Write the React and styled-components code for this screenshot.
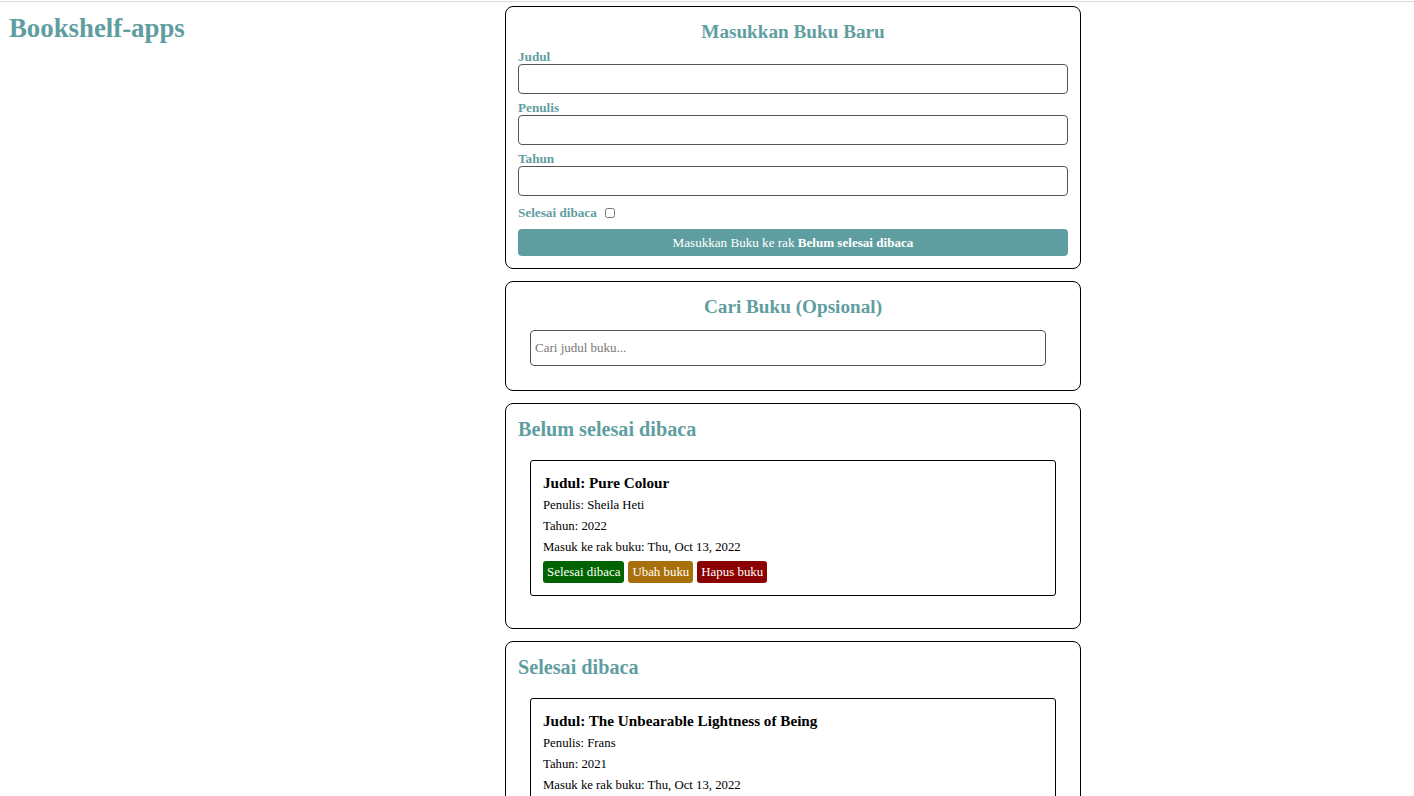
import React from 'react';
import styled, { createGlobalStyle } from 'styled-components';

const GlobalStyle = createGlobalStyle`
  body{
    margin: 0;
    font-family: "Liberation Serif", "DejaVu Serif", serif;
    background: #fff;
  }
  *{ box-sizing: border-box; }
`;

const Page = styled.div`
  margin-top: 1px;
  border-top: 1px solid #dcdcdc;
  display: flex;
  align-items: flex-start;
  min-height: 794px;
`;

const Header = styled.header`
  width: 505px;
  flex-shrink: 0;
  padding: 12px 0 0 9px;
  h1{
    margin: 0;
    font-size: 26.8px;
    line-height: 28px;
    color: #5f9ea0;
  }
`;

const Main = styled.main`
  width: 576px;
  padding-top: 4px;
  display: flex;
  flex-direction: column;
  gap: 12px;
`;

const Card = styled.section`
  border: 1px solid #000;
  border-radius: 8px;
  padding: 11px 12px ${props => props.bottom || 12}px;
  h2{
    margin: 0;
    font-size: ${props => props.center ? 19.2 : 20.2}px;
    line-height: 28px;
    color: #5f9ea0;
    text-align: ${props => props.center ? 'center' : 'left'};
  }
`;

const Field = styled.div`
  margin-top: ${props => props.first ? 4 : 7}px;
  label{
    display: block;
    font-size: 13.2px;
    line-height: 14px;
    font-weight: bold;
    color: #5f9ea0;
  }
  input{
    display: block;
    width: 100%;
    height: 30px;
    border: 1px solid #555;
    border-radius: 4px;
  }
`;

const CheckRow = styled.div`
  margin-top: 10px;
  display: flex;
  align-items: center;
  gap: 8px;
  height: 14px;
  label{
    font-size: 13.2px;
    font-weight: bold;
    color: #5f9ea0;
  }
  input{
    margin: 0;
    width: 10px;
    height: 10px;
  }
`;

const SubmitButton = styled.button`
  margin-top: 9px;
  width: 100%;
  height: 27px;
  border: 0;
  border-radius: 4px;
  background: #5f9ea0;
  color: #fff;
  font-family: inherit;
  font-size: 13.1px;
`;

const SearchInput = styled.input`
  display: block;
  margin: 9px 0 12px 12px;
  width: 516px;
  height: 36px;
  border: 1px solid #555;
  border-radius: 4px;
  padding: 0 4px;
  font-family: inherit;
  font-size: 13px;
  &::placeholder{ color: #777; }
`;

const Shelf = styled.div`
  margin: 17px 12px 0;
`;

const Book = styled.article`
  border: 1px solid #000;
  border-radius: 3px;
  padding: 12px;
  h3{
    margin: 0 0 5px;
    font-size: 15.2px;
    line-height: 20px;
    color: #000;
  }
  p{
    margin: 0 0 7px;
    font-size: 12.75px;
    line-height: 14px;
  }
`;

const Actions = styled.div`
  display: flex;
  gap: 4px;
`;

const Action = styled.button`
  height: 22px;
  padding: 0 4px;
  border: 0;
  border-radius: 3px;
  background: ${props => props.color};
  color: #fff;
  font-family: inherit;
  font-size: 12.9px;
`;

const BookItem = ({ title, author, year, done }) => (
  <Book>
    <h3>Judul: {title}</h3>
    <p>Penulis: {author}</p>
    <p>Tahun: {year}</p>
    <p>Masuk ke rak buku: Thu, Oct 13, 2022</p>
    {!done && (
      <Actions>
        <Action color="#006400">Selesai dibaca</Action>
        <Action color="#a8700a">Ubah buku</Action>
        <Action color="#8b0000">Hapus buku</Action>
      </Actions>
    )}
  </Book>
);

export default function App() {
  return (
    <Page>
      <GlobalStyle />
      <Header>
        <h1>Bookshelf-apps</h1>
      </Header>
      <Main>
        <Card center>
          <h2>Masukkan Buku Baru</h2>
          <Field first>
            <label>Judul</label>
            <input type="text" />
          </Field>
          <Field>
            <label>Penulis</label>
            <input type="text" />
          </Field>
          <Field>
            <label>Tahun</label>
            <input type="number" />
          </Field>
          <CheckRow>
            <label>Selesai dibaca</label>
            <input type="checkbox" />
          </CheckRow>
          <SubmitButton>Masukkan Buku ke rak <b>Belum selesai dibaca</b></SubmitButton>
        </Card>

        <Card center>
          <h2>Cari Buku (Opsional)</h2>
          <SearchInput placeholder="Cari judul buku..." />
        </Card>

        <Card bottom={32}>
          <h2>Belum selesai dibaca</h2>
          <Shelf>
            <BookItem title="Pure Colour" author="Sheila Heti" year="2022" />
          </Shelf>
        </Card>

        <Card bottom={32}>
          <h2>Selesai dibaca</h2>
          <Shelf>
            <BookItem title="The Unbearable Lightness of Being" author="Frans" year="2021" done />
          </Shelf>
        </Card>
      </Main>
    </Page>
  );
}
